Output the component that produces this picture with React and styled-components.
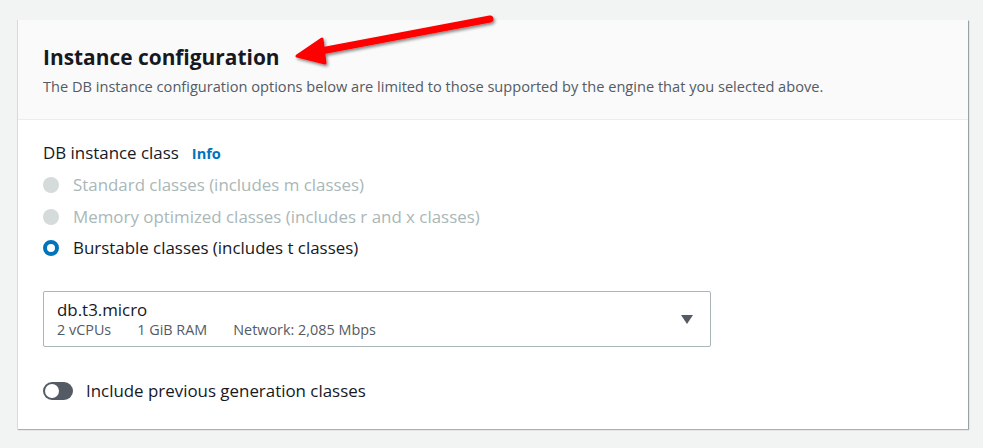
import styled, { createGlobalStyle } from "styled-components";

const GlobalStyle = createGlobalStyle`
  html, body {
    margin: 0;
    padding: 0;
    background: #f2f3f3;
    font-family: "Open Sans", "Noto Sans", sans-serif;
    color: #16191f;
  }
`;

const Page = styled.div`
  position: relative;
  width: 983px;
  height: 448px;
  padding: 20px 15px 0 17px;
  box-sizing: border-box;
`;

const Card = styled.section`
  background: #fff;
  border-left: 1px solid #d5dbdb;
  box-shadow: 1px 1px 1px 0 rgba(0, 28, 36, 0.3), 1px 0 0 0 rgba(0, 28, 36, 0.1);
  height: 409px;
`;

const Header = styled.header`
  background: #fafafa;
  border-bottom: 1px solid #eaeded;
  padding: 23px 25px 0;
  height: 100px;
  box-sizing: border-box;
`;

const Title = styled.h2`
  margin: 0;
  font-size: 20.9px;
  font-weight: 700;
  line-height: 28px;
`;

const Description = styled.p`
  margin: 5px 0 0;
  font-size: 14.6px;
  line-height: 20px;
  color: #545b64;
`;

const Body = styled.div`
  padding: 21px 25px 0;
  display: flex;
  flex-direction: column;
`;

const LabelRow = styled.div`
  display: flex;
  align-items: baseline;
  gap: 13px;
  font-size: 16.9px;
  line-height: 24px;
  margin-bottom: 8px;
`;

const InfoLink = styled.a`
  color: #0073bb;
  font-size: 14.6px;
  font-weight: 700;
`;

const RadioList = styled.div`
  display: flex;
  flex-direction: column;
  gap: 7.5px;
`;

const RadioRow = styled.label`
  display: flex;
  align-items: center;
  gap: 14px;
  font-size: 16.9px;
  line-height: 24px;
  color: ${(p) => (p.disabled ? "#aab7b8" : "#16191f")};
`;

const RadioDot = styled.span`
  width: 16px;
  height: 16px;
  border-radius: 50%;
  box-sizing: border-box;
  background: ${(p) => (p.checked ? "#fff" : "#d5dbdb")};
  border: ${(p) => (p.checked ? "4.5px solid #0073bb" : "none")};
  flex-shrink: 0;
`;

const Select = styled.div`
  margin-top: 31px;
  width: 668px;
  height: 56px;
  box-sizing: border-box;
  border: 1px solid #aab7b8;
  border-radius: 2px;
  display: flex;
  align-items: center;
  padding: 1px 17px 0 13px;
`;

const SelectText = styled.div`
  flex: 1;
  display: flex;
  flex-direction: column;
`;

const SelectValue = styled.div`
  font-size: 16.9px;
  line-height: 20px;
`;

const Specs = styled.div`
  display: flex;
  gap: 26px;
  font-size: 14.4px;
  line-height: 20px;
  color: #545b64;
`;

const Caret = styled.span`
  width: 0;
  height: 0;
  border-left: 6px solid transparent;
  border-right: 6px solid transparent;
  border-top: 9px solid #545b64;
`;

const ToggleRow = styled.label`
  margin-top: 32px;
  display: flex;
  align-items: center;
  gap: 13px;
  font-size: 16.9px;
  line-height: 24px;
`;

const Toggle = styled.span`
  width: 30px;
  height: 18px;
  border-radius: 9px;
  background: #545b64;
  display: flex;
  align-items: center;
  padding: 2px;
  box-sizing: border-box;

  &::before {
    content: "";
    width: 14px;
    height: 14px;
    border-radius: 50%;
    background: #fff;
  }
`;

const Arrow = styled.svg`
  position: absolute;
  left: 285px;
  top: 5px;
  overflow: visible;
`;

export default function App() {
  return (
    <>
      <GlobalStyle />
      <Page>
        <Card>
          <Header>
            <Title>Instance configuration</Title>
            <Description>
              The DB instance configuration options below are limited to those
              supported by the engine that you selected above.
            </Description>
          </Header>
          <Body>
            <LabelRow>
              DB instance class <InfoLink>Info</InfoLink>
            </LabelRow>
            <RadioList>
              <RadioRow disabled>
                <RadioDot />
                Standard classes (includes m classes)
              </RadioRow>
              <RadioRow disabled>
                <RadioDot />
                Memory optimized classes (includes r and x classes)
              </RadioRow>
              <RadioRow>
                <RadioDot checked />
                Burstable classes (includes t classes)
              </RadioRow>
            </RadioList>
            <Select>
              <SelectText>
                <SelectValue>db.t3.micro</SelectValue>
                <Specs>
                  <span>2 vCPUs</span>
                  <span>1 GiB RAM</span>
                  <span>Network: 2,085 Mbps</span>
                </Specs>
              </SelectText>
              <Caret />
            </Select>
            <ToggleRow>
              <Toggle />
              Include previous generation classes
            </ToggleRow>
          </Body>
        </Card>
        <Arrow width="220" height="70" viewBox="0 0 220 70">
          <defs>
            <filter id="sh" x="-20%" y="-50%" width="140%" height="200%">
              <feDropShadow dx="1.5" dy="2" stdDeviation="1.5" floodColor="#000" floodOpacity="0.45" />
            </filter>
          </defs>
          <g filter="url(#sh)" fill="#ff0000" stroke="#ff0000" strokeLinejoin="round" strokeLinecap="round">
            <line x1="205" y1="14" x2="36" y2="46" strokeWidth="7" />
            <polygon points="12,51 37,34 40,58" strokeWidth="3" />
          </g>
        </Arrow>
      </Page>
    </>
  );
}
